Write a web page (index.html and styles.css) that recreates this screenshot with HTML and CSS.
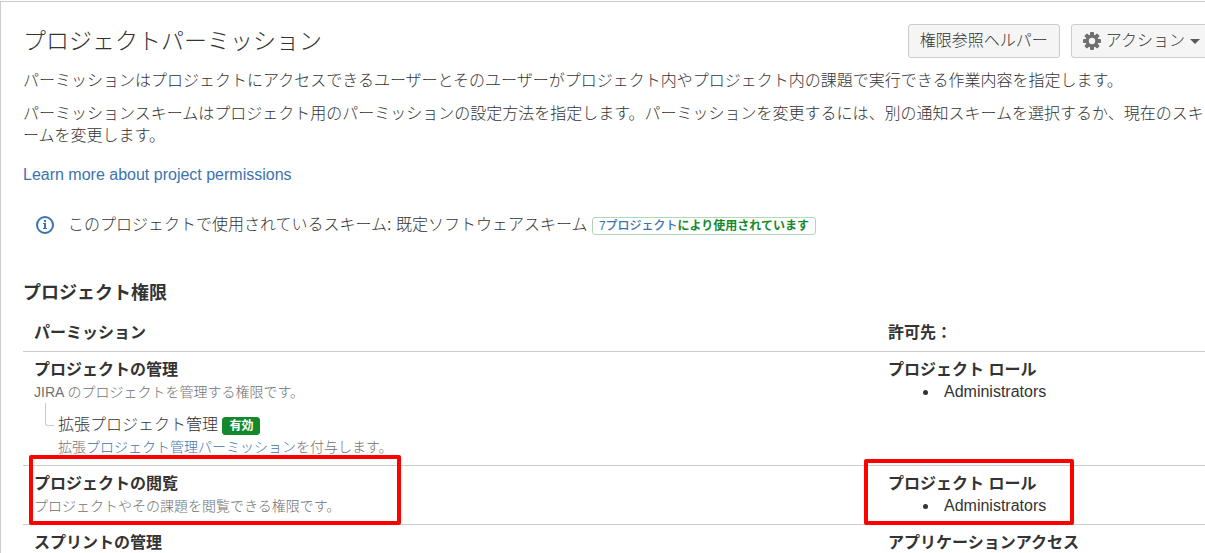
FILE: index.html
```html
<!DOCTYPE html>
<html lang="ja">
  <head>
    <meta charset="UTF-8" />
    <meta name="viewport" content="width=device-width, initial-scale=1.0" />
    <title>プロジェクトパーミッション</title>
    <link rel="stylesheet" href="styles.css">
  </head>
  <body>
    <main class="panel">
      <header class="page-header">
        <h1>プロジェクトパーミッション</h1>
        <div class="actions">
          <button type="button" class="button">権限参照ヘルパー</button>
          <button type="button" class="button">
            <svg viewBox="0 0 18 18" width="18" height="18" aria-hidden="true">
              <g fill="#707070">
                <rect x="7" y="0" width="4" height="18" rx="1" />
                <rect x="7" y="0" width="4" height="18" rx="1" transform="rotate(45 9 9)" />
                <rect x="7" y="0" width="4" height="18" rx="1" transform="rotate(90 9 9)" />
                <rect x="7" y="0" width="4" height="18" rx="1" transform="rotate(135 9 9)" />
                <circle cx="9" cy="9" r="6.5" />
              </g>
              <circle cx="9" cy="9" r="3.2" fill="#f5f5f5" />
            </svg>
            アクション
            <span class="arrow"></span>
          </button>
        </div>
      </header>

      <p>パーミッションはプロジェクトにアクセスできるユーザーとそのユーザーがプロジェクト内やプロジェクト内の課題で実行できる作業内容を指定します。</p>
      <p>パーミッションスキームはプロジェクト用のパーミッションの設定方法を指定します。パーミッションを変更するには、別の通知スキームを選択するか、現在のスキームを変更します。</p>
      <p class="learn-more"><a href="#">Learn more about project permissions</a></p>

      <div class="scheme">
        <svg viewBox="0 0 18 18" width="18" height="18" aria-hidden="true">
          <circle cx="9" cy="9" r="8" fill="none" stroke="#3b73af" stroke-width="2" />
          <rect x="8" y="4" width="2" height="2" fill="#3b73af" />
          <path d="M7 7h3v5h1v1H7v-1h1V8H7z" fill="#3b73af" />
        </svg>
        <div>
          このプロジェクトで使用されているスキーム: 既定ソフトウェアスキーム
          <span class="lozenge lozenge-subtle"><a href="#">7プロジェクト</a>により使用されています</span>
        </div>
      </div>

      <h2>プロジェクト権限</h2>
      <table class="permissions">
        <thead>
          <tr>
            <th>パーミッション</th>
            <th class="col-granted">許可先：</th>
          </tr>
        </thead>
        <tbody>
          <tr>
            <td>
              <strong>プロジェクトの管理</strong>
              <div class="description">JIRA のプロジェクトを管理する権限です。</div>
              <div class="extended">
                <div>拡張プロジェクト管理 <span class="lozenge">有効</span></div>
                <div class="description">拡張<a href="#">プロジェクト管理パーミッション</a>を付与します。</div>
              </div>
            </td>
            <td>
              <strong>プロジェクト ロール</strong>
              <ul>
                <li>Administrators</li>
              </ul>
            </td>
          </tr>
          <tr>
            <td>
              <strong>プロジェクトの閲覧</strong>
              <div class="description">プロジェクトやその課題を閲覧できる権限です。</div>
              <div class="marker marker-permission"></div>
            </td>
            <td>
              <strong>プロジェクト ロール</strong>
              <ul>
                <li>Administrators</li>
              </ul>
              <div class="marker marker-role"></div>
            </td>
          </tr>
          <tr>
            <td>
              <strong>スプリントの管理</strong>
            </td>
            <td>
              <strong>アプリケーションアクセス</strong>
            </td>
          </tr>
        </tbody>
      </table>
    </main>
  </body>
</html>
```
FILE: styles.css
```css
body {
  margin: 0;
  padding-top: 1px;
  overflow: hidden;
  background: #fff;
  color: #333;
  font-family: "Liberation Sans", "Noto Sans CJK JP", sans-serif;
  font-size: 16px;
  font-weight: 300;
  line-height: 22px;
}

a {
  color: #3b73af;
  text-decoration: none;
}

.panel {
  padding: 22px 0 0 22px;
  border-top: 1px solid #ccc;
  border-left: 1px solid #ccc;
}

/* the last button runs a little past the right side of the window */
.page-header {
  display: flex;
  justify-content: space-between;
  align-items: center;
  margin-right: -7px;
}

h1 {
  margin: 0;
  font-size: 23px;
  font-weight: 300;
  line-height: 32px;
}

.actions {
  display: flex;
  align-items: center;
  gap: 11px;
}

.button {
  display: flex;
  align-items: center;
  gap: 5px;
  height: 34px;
  padding: 0 11px;
  border: 1px solid #ccc;
  border-radius: 3px;
  background: #f5f5f5;
  color: #333;
  font: inherit;
}

.arrow {
  border: 5px solid transparent;
  border-top-color: #595959;
  border-bottom: none;
}

p {
  margin: 11px 0 0;
}

.page-header + p {
  margin-top: 12px;
}

.learn-more {
  margin-top: 17px;
}

.scheme {
  display: flex;
  align-items: center;
  gap: 14px;
  margin-top: 28px;
  padding-left: 13px;
}

.lozenge {
  display: inline-block;
  padding: 0 6px;
  border: 1px solid #14892c;
  border-radius: 3px;
  background: #14892c;
  color: #fff;
  font-size: 12px;
  font-weight: bold;
  line-height: 16px;
}

.lozenge-subtle {
  border-color: #b2d8b9;
  background: #fff;
  color: #14892c;
}

.lozenge-subtle a {
  font-weight: 500;
}

h2 {
  margin: 46px 0 11px;
  font-size: 18px;
  line-height: 22px;
}

.permissions {
  width: 100%;
  border-collapse: collapse;
  table-layout: fixed;
}

.permissions th,
.permissions td {
  position: relative;
  padding: 7px 11px;
  border-bottom: 1px solid #ccc;
  text-align: left;
  vertical-align: top;
}

.permissions .col-granted {
  width: 306px;
}

.permissions strong {
  display: block;
  font-weight: bold;
}

.permissions ul {
  margin: 0;
  padding-left: 51px;
}

.permissions li {
  padding-left: 5px;
}

.description {
  color: #707070;
  font-size: 14px;
}

.extended {
  position: relative;
  margin-top: 11px;
  padding-left: 24px;
}

/* branch line from the parent permission */
.extended::before {
  content: "";
  position: absolute;
  top: -11px;
  left: 11px;
  width: 8px;
  height: 22px;
  border-left: 1px solid #ccc;
  border-bottom: 1px solid #ccc;
  border-bottom-left-radius: 3px;
}

.marker {
  position: absolute;
  box-sizing: border-box;
  border: 4px solid #f00;
  border-radius: 2px;
}

.marker-permission {
  top: -11px;
  left: 6px;
  width: 372px;
  height: 70px;
}

.marker-role {
  top: -7px;
  left: -13px;
  width: 210px;
  height: 66px;
}
```
